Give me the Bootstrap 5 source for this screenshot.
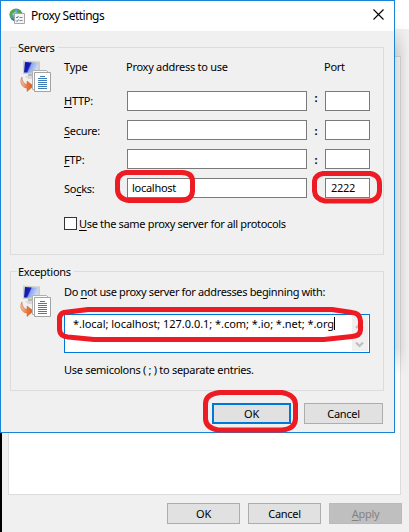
<!DOCTYPE html>
<html lang="en">
<head>
<meta charset="utf-8">
<meta name="viewport" content="width=device-width, initial-scale=1">
<title>Proxy Settings</title>
<link href="https://cdn.jsdelivr.net/npm/bootstrap@5.3.0/dist/css/bootstrap.min.css" rel="stylesheet">
<style>
html,body{height:532px;overflow:hidden}
body{font:11px/16px "Noto Sans","Open Sans",sans-serif;letter-spacing:-.27px;color:#000;background:#f0f0f0}
u{text-underline-offset:2px;text-decoration-thickness:1px;text-decoration-skip-ink:none}
.parent-win{height:532px;border-left:2px solid #000;background:#f0f0f0}
.parent-title{height:29px;background:#fff}
.tab-page{margin:27px 8px 0 6px;height:439px;border:1px solid #dcdcdc;background:#fff}
.parent-actions{padding:8px 7px 0 0;gap:8px}
.win-btn{width:73px;height:21px;border:1px solid #adadad;background:#e1e1e1;border-radius:0;padding:0;font:inherit;line-height:19px;letter-spacing:-.3px;color:#000;display:block}
.win-btn.wide{width:79px}
.win-btn.is-default{border:2px solid #0078d7;line-height:17px}
.win-btn.off{background:#bfbfbf;border-color:#bababa;color:#838383}
.dialog-win{left:0;top:0;width:395px;height:433px;border:1px solid #1883d7;background:#f0f0f0}
.dialog-win::after{content:"";position:absolute;left:394px;top:22px;width:14px;height:353px;background:linear-gradient(90deg,rgba(0,0,0,.15),rgba(0,0,0,.07) 45%,transparent);-webkit-mask:linear-gradient(transparent,#000 30px,#000 325px,transparent);mask:linear-gradient(transparent,#000 30px,#000 325px,transparent)}
.title-bar{height:30px;background:#fff;padding:0 10px 0 8px}
.title-text{font-size:12px;letter-spacing:-.5px;padding-left:5px}
.group{border:1px solid #dcdcdc;margin:0 10px 0 9px;padding:0 9px}
.g-servers{height:208px;margin-top:16px}
.g-exc{height:120px;margin-top:16px}
.group-name{display:block;width:max-content;height:16px;margin:-8px 0 0 -3px;padding:0 3px 0 1px;background:#f0f0f0}
.group-icon{width:32px;height:32px;margin-top:4px;flex:none}
.g-exc .group-icon{margin-top:5px}
.group-body{margin-left:12px}
.fields{display:grid;grid-template-columns:63px 180px 18px 45px;row-gap:9px}
.fields .hd{height:26px;padding-top:3px;margin-left:-1px}
.fields .lab{padding-top:3px;height:20px}
.fields .lab.first{padding-top:2px}
.fields .hd:first-child{margin-left:0}
.box{height:20px;border:1px solid #7a7a7a;background:#fff;border-radius:0;padding:0 0 0 4px;line-height:18px}
.box.num{padding-left:5px}
.colon{height:20px;text-align:center;font-weight:700;padding:3px 0 0 0}
.colon.first{padding-top:0;line-height:14px}
.check{width:13px;height:13px;border:1px solid #333;background:#fff}
.same{margin-top:18px;gap:2px;letter-spacing:-.33px}
.check{margin-top:-1px}
.exc-label{margin-top:4px;letter-spacing:-.35px}
.exc-box{width:306px;height:39px;border:1px solid #0078d7;background:#fff;margin-top:14px}
.exc-text{padding:1px 0 0 8px;white-space:nowrap;letter-spacing:-.04px}
.exc-note{margin-top:9px;letter-spacing:-.29px}
.caret{width:1px;height:13px;background:#000;margin-top:2px}
.scroller{width:16px;background:#f0f0f0;margin:1px}
.dialog-actions{margin-top:12px;padding-right:11px;gap:13px}
.marks{left:0;top:0;pointer-events:none}
</style>
<script src="https://cdn.jsdelivr.net/npm/bootstrap@5.3.0/dist/js/bootstrap.bundle.min.js"></script>
</head>
<body class="position-relative m-0">
<svg width="0" height="0" class="position-absolute">
<defs>
<linearGradient id="scr" x1="0" x2="1" y1="0" y2=".35"><stop offset="0" stop-color="#0c12a8"/><stop offset=".45" stop-color="#1720b4"/><stop offset=".55" stop-color="#8ba4ee"/><stop offset="1" stop-color="#c9dafa"/></linearGradient>
<linearGradient id="arr" x1="0" x2="1"><stop offset="0" stop-color="#f6c3a4"/><stop offset=".5" stop-color="#e8783c"/><stop offset="1" stop-color="#d95a1c"/></linearGradient>
<radialGradient id="globe" cx=".35" cy=".35" r=".7"><stop offset="0" stop-color="#a8dcf4"/><stop offset=".6" stop-color="#3a87cb"/><stop offset="1" stop-color="#1c4f9c"/></radialGradient>
<symbol id="pc" viewBox="0 0 32 32">
<path d="M3 .5 20 1.500 20 14 3 14z" fill="#cfcfca"/>
<path d="M5 2 18 3 18 13 4 12.500z" fill="url(#scr)"/>
<path d="M8 14h6v2.500H8z" fill="#b7b7b7"/><path d="M5 16h10l-2 3H8z" fill="#d9d9d9"/>
<path d="M2 17C-1 22 2 28 7 28L7 31.500 13.500 26 7 21 7 24.500C4 24 2 21 2 17z" fill="url(#arr)" stroke="#c7602c" stroke-width=".5"/>
<path d="M12.500 10.500h14l2 2v17h-16z" fill="#fff" stroke="#b0b0b0"/>
<path d="M14.500 12.500h16v19h-16z" fill="#fff" stroke="#a3a3a3"/>
<path d="M20 16.500h5M18 18.500h9M18 20.500h9M18 22.500h9M18 24.500h9M18 26.500h9M18 28.500h9" stroke="#3f7cb8"/>
</symbol>
</defs>
</svg>

<div class="parent-win">
  <div class="parent-title"></div>
  <div class="tab-page"></div>
  <div class="parent-actions d-flex justify-content-end">
    <button class="win-btn">OK</button>
    <button class="win-btn">Cancel</button>
    <button class="win-btn off"><u>A</u>pply</button>
  </div>
</div>

<div class="dialog-win position-absolute">
  <div class="title-bar d-flex align-items-center">
    <svg width="17" height="17" viewBox="0 0 17 17">
      <circle cx="7" cy="7" r="6.500" fill="url(#globe)"/>
      <path d="M1 4Q3 1 7 1L6 4 3 6 4 9 2 10Q0 7 1 4zM9 1q3 1 4 4l-3 1-2-2z" fill="#55a845"/>
      <path d="M5.500 5.500h10v10h-10z" fill="#f5f5f5" stroke="#a6a6a6"/>
      <path d="M7 9l1 1 1.500-2M7 12.500l1 1 1.500-2" fill="none" stroke="#2f80b5"/>
      <path d="M10.500 9.500h3M10.500 12.500h3" stroke="#888"/>
    </svg>
    <span class="title-text">Proxy Settings</span>
    <svg class="ms-auto mb-1" width="11" height="11" viewBox="0 0 11 11"><path d="M.5.5l10 10M10.500.5l-10 10" stroke="#000" stroke-width="1.100"/></svg>
  </div>

  <div class="group g-servers">
    <span class="group-name">Servers</span>
    <div class="d-flex">
      <svg class="group-icon"><use href="#pc"/></svg>
      <div class="group-body">
        <div class="fields">
          <div class="hd">Type</div><div class="hd">Proxy address to use</div><div></div><div class="hd">Port</div>
          <div class="lab first"><u>H</u>TTP:</div><div class="box"></div><div class="colon first">:</div><div class="box"></div>
          <div class="lab"><u>S</u>ecure:</div><div class="box"></div><div class="colon">:</div><div class="box"></div>
          <div class="lab"><u>F</u>TP:</div><div class="box"></div><div class="colon">:</div><div class="box"></div>
          <div class="lab">So<u>c</u>ks:</div><div class="box">localhost</div><div></div><div class="box num">2222</div>
        </div>
        <div class="same d-flex align-items-center"><span class="check"></span><span><u>U</u>se the same proxy server for all protocols</span></div>
      </div>
    </div>
  </div>

  <div class="group g-exc">
    <span class="group-name">Exceptions</span>
    <div class="d-flex">
      <svg class="group-icon"><use href="#pc"/></svg>
      <div class="group-body">
        <div class="exc-label">Do <u>n</u>ot use proxy server for addresses beginning with:</div>
        <div class="exc-box d-flex">
          <span class="exc-text">*.local; localhost; 127.0.0.1; *.com; *.io; *.net; *.org</span><span class="caret"></span>
          <svg class="scroller ms-auto" viewBox="0 0 16 35"><path d="M4 12l3.500-3.500L11 12M4 26.500l3.500 3.500 3.500-3.500" fill="none" stroke="#bfbfbf" stroke-width="2.200"/></svg>
        </div>
        <div class="exc-note">Use semicolons ( ; ) to separate entries.</div>
      </div>
    </div>
  </div>

  <div class="dialog-actions d-flex justify-content-end">
    <button class="win-btn wide is-default">OK</button>
    <button class="win-btn wide">Cancel</button>
  </div>
</div>

<svg class="marks position-absolute" width="409" height="532" fill="none" stroke="#ed1c24" stroke-width="5" stroke-linejoin="round">
  <path d="M126 172.500H182Q192.500 173 192.500 181V191Q192 200 181 200.500H129Q118 199 117.500 190V181Q118 174 126 172.500z"/>
  <path d="M323 173.500H370Q379.500 175 379.500 184V191Q379 200 369 201H325Q315 199 314.500 191V181Q315 175 323 173.500z"/>
  <path d="M332 309.500H88L64 312.500Q59 314 59.500 320V330Q60 336 68 337L94 339.500H324L352 336.500Q360 336 360.500 330V321Q360 313 352 312.500L332 309.500z"/>
  <path d="M220 392.500H282Q295 395 295.500 404V419Q295 429 282 430H218Q206 428 205.500 419V403Q206 394 220 392.500z"/>
</svg>
</body>
</html>
